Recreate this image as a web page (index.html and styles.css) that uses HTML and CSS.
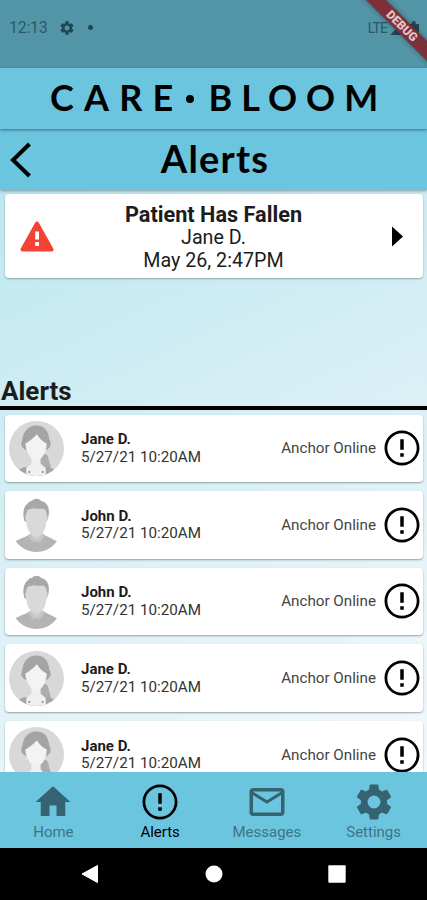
FILE: index.html
```
<!DOCTYPE html>
<html lang="en">
<head>
  <meta charset="UTF-8">
  <meta name="viewport" content="width=device-width, initial-scale=1">
  <title>Care Bloom - Alerts</title>
  <link rel="stylesheet" href="styles.css">
</head>
<body>
  <!-- Shared icons -->
  <svg class="defs" width="0" height="0">
    <symbol id="gear" viewBox="0 0 24 24">
      <path d="M19.43 12.98c.04-.32.07-.64.07-.98s-.03-.66-.07-.98l2.11-1.65c.19-.15.24-.42.12-.64l-2-3.46c-.12-.22-.39-.3-.61-.22l-2.49 1c-.52-.4-1.08-.73-1.69-.98l-.38-2.65C14.46 2.18 14.25 2 14 2h-4c-.25 0-.46.18-.49.42l-.38 2.65c-.61.25-1.17.59-1.69.98l-2.49-1c-.23-.09-.49 0-.61.22l-2 3.46c-.13.22-.07.49.12.64l2.11 1.65c-.04.32-.07.65-.07.98s.03.66.07.98l-2.11 1.65c-.19.15-.24.42-.12.64l2 3.46c.12.22.39.3.61.22l2.49-1c.52.4 1.08.73 1.69.98l.38 2.65c.03.24.24.42.49.42h4c.25 0 .46-.18.49-.42l.38-2.65c.61-.25 1.17-.59 1.69-.98l2.49 1c.23.09.49 0 .61-.22l2-3.46c.12-.22.07-.49-.12-.64l-2.11-1.65zM12 15.700a3.700 3.700 0 1 1 0-7.400 3.700 3.700 0 0 1 0 7.400z"/>
    </symbol>
    <symbol id="alert" viewBox="0 0 24 24">
      <path d="M11 15h2v2h-2zm0-8h2v6h-2zm.99-5C6.47 2 2 6.48 2 12s4.47 10 9.99 10C17.52 22 22 17.52 22 12S17.52 2 11.99 2zM12 20.400a8.400 8.400 0 1 1 0-16.800 8.400 8.400 0 0 1 0 16.800z"/>
    </symbol>
    <symbol id="jane" viewBox="0 0 54 54">
      <clipPath id="round"><circle cx="27" cy="27" r="27"/></clipPath>
      <g clip-path="url(#round)">
        <rect width="54" height="54" fill="#d8d8d8"/>
        <path d="M32 32c5 0 7 2 7 6 1 4 3 6 1 11l-5 2-5-12z" fill="#adadad"/>
        <path d="M9 48q5-3 9-3h18q5 0 9 3v6H9z" fill="#a6a6a6"/>
        <path d="M22 34h9v8l5 4v8H17v-8l5-4z" fill="#f0f0f0"/>
        <path d="M18 29c-6-2-7-6-5-10 1-9 6-14.500 14-14.500s12 6 12.500 13.500c3 5 1 9-3.500 11l-5-7H21z" fill="#a4a4a4"/>
        <path d="M16 22c4-2 8-5 11.500-9 2 4 5 7 9.500 9 0 9-5 16.500-10 16.500S16.500 31 16 22z" fill="#f3f3f3"/>
        <path d="M20 49v2m13-2v2" stroke="#888" stroke-width="1.500"/>
      </g>
    </symbol>
    <symbol id="john" viewBox="0 0 54 54">
      <path d="M6.500 43.500c4-3 10-4 14.500-7.500h12c5 3.500 10 4.500 14 7.500-5 7-12 10.500-20 10.500s-15-3.500-20.500-10.500z" fill="#b4b4b4"/>
      <path d="M21 32h12v5l-6 7-6-7z" fill="#d0d0d0"/>
      <path d="m21 36 6 7 6-7 2 3-5 6-3-2-3 2-5-6z" fill="#c5c5c5"/>
      <path d="M15.500 24c-2-5-2-12 1-16 3-2 3-4 6-4 2-3 7-3 9 0 6 1 8.500 7 7.500 13 0 3-1 5-2 7z" fill="#a8a8a8"/>
      <path d="M17 16c1-5 4-4 7-5 5 1 9 0 11 1 1 1 2 3 2 5l1 3-1.500 5c0 8-5 13.500-9.500 13.500S17.500 33 17 25l-1-5z" fill="#d9d9d9"/>
    </symbol>
  </svg>

  <div class="status-bar">
    <span class="time">12:13</span>
    <svg class="status-gear"><use href="#gear"/></svg>
    <span class="status-dot"></span>
    <span class="lte">LTE</span>
    <svg class="signal" viewBox="0 0 29 14"><path d="M0 14 13 1v13zM18 14V3h3l2-3h2l1 3h3v11z"/></svg>
  </div>
  <div class="debug"><span>DEBUG</span></div>

  <header class="brand">CARE<span class="brand-dot"></span><span class="bloom">BLOOM</span></header>

  <div class="title-bar">
    <svg class="back" viewBox="0 0 22 36"><path d="M19.500 2 3 18l16.500 16"/></svg>
    <h1>Alerts</h1>
  </div>

  <main>
    <section class="fall-card">
      <svg class="warning" viewBox="0 0 34 31">
        <path d="M17 2.500 31.500 28.500h-29z" fill="#f44336" stroke="#f44336" stroke-width="4" stroke-linejoin="round"/>
        <path d="M15.200 10.500h3.800v8h-3.800zm0 10.500h3.800v4h-3.800z" fill="#fff"/>
      </svg>
      <div class="fall-text">
        <strong>Patient Has Fallen</strong>
        <span>Jane D.</span>
        <span>May 26, 2:47PM</span>
      </div>
      <svg class="arrow" viewBox="0 0 12 22"><path d="M0 0 12 11 0 22z"/></svg>
    </section>

    <h2>Alerts</h2>

    <div class="alert-list">
      <div class="alert-row">
        <svg class="avatar"><use href="#jane"/></svg>
        <div class="who"><strong>Jane D.</strong><span>5/27/21 10:20AM</span></div>
        <span class="what">Anchor Online</span>
        <svg class="mark"><use href="#alert"/></svg>
      </div>
      <div class="alert-row">
        <svg class="avatar"><use href="#john"/></svg>
        <div class="who"><strong>John D.</strong><span>5/27/21 10:20AM</span></div>
        <span class="what">Anchor Online</span>
        <svg class="mark"><use href="#alert"/></svg>
      </div>
      <div class="alert-row">
        <svg class="avatar"><use href="#john"/></svg>
        <div class="who"><strong>John D.</strong><span>5/27/21 10:20AM</span></div>
        <span class="what">Anchor Online</span>
        <svg class="mark"><use href="#alert"/></svg>
      </div>
      <div class="alert-row">
        <svg class="avatar"><use href="#jane"/></svg>
        <div class="who"><strong>Jane D.</strong><span>5/27/21 10:20AM</span></div>
        <span class="what">Anchor Online</span>
        <svg class="mark"><use href="#alert"/></svg>
      </div>
      <div class="alert-row">
        <svg class="avatar"><use href="#jane"/></svg>
        <div class="who"><strong>Jane D.</strong><span>5/27/21 10:20AM</span></div>
        <span class="what">Anchor Online</span>
        <svg class="mark"><use href="#alert"/></svg>
      </div>
    </div>
  </main>

  <nav class="tabs">
    <a class="tab">
      <svg viewBox="0 0 24 24"><path d="M10 20v-6h4v6h5v-8h3L12 3 2 12h3v8z"/></svg>
      Home
    </a>
    <a class="tab active">
      <svg><use href="#alert"/></svg>
      Alerts
    </a>
    <a class="tab">
      <svg viewBox="0 0 24 24"><path d="M22 6c0-1.100-.9-2-2-2H4c-1.100 0-2 .9-2 2v12c0 1.100.9 2 2 2h16c1.100 0 2-.9 2-2V6zm-2 0-8 5-8-5h16zm0 12H4V8l8 5 8-5v10z"/></svg>
      Messages
    </a>
    <a class="tab">
      <svg><use href="#gear"/></svg>
      Settings
    </a>
  </nav>

  <div class="system-nav">
    <svg viewBox="0 0 20 20"><path d="M1 10 16.500 1.500v17z" stroke-linejoin="round" stroke="#fff"/></svg>
    <svg viewBox="0 0 20 20"><circle cx="10" cy="10" r="8.500"/></svg>
    <svg viewBox="0 0 20 20"><rect x="1.300" y="1.300" width="17.400" height="17.400" rx="1"/></svg>
  </div>
</body>
</html>
```
FILE: styles.css
```
* {
  margin: 0;
  padding: 0;
  box-sizing: border-box;
}
body {
  position: relative;
  width: 427px;
  height: 900px;
  display: flex;
  flex-direction: column;
  overflow: hidden;
  font-family: Roboto, sans-serif;
  color: #1c1c1c;
}
svg {
  flex: none;
}
.defs {
  position: absolute;
}

/* Android status bar */
.status-bar {
  height: 68px;
  flex: none;
  display: flex;
  align-items: center;
  padding: 0 8px 13px 9px;
  background: #5295a7;
  color: #2c596a;
  font-size: 16px;
}
.time {
  width: 39px;
  letter-spacing: -0.3px;
}
.status-gear {
  width: 16px;
  height: 16px;
  margin-left: 11px;
  fill: #224653;
}
.status-dot {
  width: 5px;
  height: 5px;
  margin-left: 13px;
  border-radius: 50%;
  background: #224653;
}
.lte {
  margin-left: auto;
  font-size: 14px;
  letter-spacing: -0.9px;
}
.signal {
  width: 29px;
  height: 14px;
  margin-left: 3px;
  fill: #234656;
}
.debug {
  position: absolute;
  top: 0;
  right: 0;
  width: 80px;
  height: 80px;
  overflow: hidden;
}
.debug span {
  position: absolute;
  top: 19px;
  left: -5px;
  width: 120px;
  height: 14px;
  background: #7d303a;
  box-shadow: 0 0 5px rgba(0, 0, 0, 0.4);
  color: #e2c5c9;
  font-size: 12px;
  font-weight: 900;
  line-height: 14px;
  text-align: center;
  transform: rotate(45deg);
}

/* Headers */
.brand {
  position: relative;
  z-index: 2;
  height: 61px;
  flex: none;
  display: flex;
  align-items: center;
  padding: 0 0 3px 50px;
  background: #6bc5df;
  box-shadow: 0 1px 3px rgba(0, 0, 0, 0.45);
  color: #000;
  font-family: Lato, sans-serif;
  font-size: 36px;
  font-weight: 700;
  letter-spacing: 10.200px;
}
.brand-dot {
  width: 8px;
  height: 8px;
  margin: 3px 14px 0 3px;
  border-radius: 50%;
  background: #000;
}
.bloom {
  letter-spacing: 9px;
}
.title-bar {
  position: relative;
  z-index: 1;
  height: 61px;
  flex: none;
  display: grid;
  grid-template-columns: 50px 1fr 50px;
  align-items: center;
  background: #6bc5df;
  box-shadow: 0 1px 3px rgba(0, 0, 0, 0.35);
}
.back {
  width: 22px;
  height: 36px;
  margin-left: 10px;
  fill: none;
  stroke: #000;
  stroke-width: 4;
}
.title-bar h1 {
  padding: 0 0 3px 3px;
  color: #000;
  font-family: Lato, sans-serif;
  font-size: 38px;
  font-weight: 700;
  letter-spacing: 1.200px;
  text-align: center;
}

/* Content */
main {
  flex: 1;
  min-height: 0;
  overflow: hidden;
  display: flex;
  flex-direction: column;
  background: linear-gradient(155deg, #bfe7f1 0%, #d7eff5 45%, #f2f9fd 100%);
}
.fall-card {
  height: 84px;
  flex: none;
  margin: 4px 4px 0 5px;
  padding: 0 20px 0 15px;
  display: grid;
  grid-template-columns: 34px 1fr 34px;
  align-items: center;
  background: #fff;
  border-radius: 4px;
  box-shadow: 0 1px 2px rgba(0, 0, 0, 0.3);
}
.warning {
  width: 34px;
  height: 31px;
}
.fall-text {
  display: flex;
  flex-direction: column;
  align-items: center;
  padding: 2px 0 0 4px;
  font-size: 19.700px;
  line-height: 23px;
}
.fall-text strong {
  font-size: 21.700px;
  font-weight: 700;
}
.arrow {
  width: 11px;
  height: 21px;
  justify-self: end;
}
main h2 {
  height: 132px;
  flex: none;
  padding: 98px 0 0 1px;
  border-bottom: 4px solid #000;
  font-size: 26px;
  font-weight: 700;
  line-height: 30px;
}
.alert-list {
  display: flex;
  flex-direction: column;
  gap: 9px;
  padding: 4.500px 4px 0 5px;
}
.alert-row {
  height: 67.600px;
  flex: none;
  display: flex;
  align-items: center;
  padding: 0 0 0 4px;
  background: #fff;
  border-radius: 4px;
  box-shadow: 0 1px 2px rgba(0, 0, 0, 0.35);
}
.avatar {
  width: 55px;
  height: 55px;
}
.who {
  display: flex;
  flex-direction: column;
  margin-left: 17px;
  padding-top: 1px;
  font-size: 15.200px;
  line-height: 17.500px;
  color: #333;
}
.who strong {
  font-size: 15px;
  font-weight: 700;
  color: #1c1c1c;
}
.what {
  margin-left: auto;
  color: #444;
  font-size: 15.200px;
}
.mark {
  width: 42px;
  height: 42px;
  margin-left: 5px;
}

/* Bottom tabs */
.tabs {
  height: 76px;
  flex: none;
  display: grid;
  grid-template-columns: repeat(4, 1fr);
  background: #6bc5df;
}
.tab {
  display: flex;
  flex-direction: column;
  align-items: center;
  padding-top: 9px;
  color: #3e7583;
  font-size: 15px;
  line-height: 18px;
}
.tab svg {
  width: 42px;
  height: 42px;
  fill: #356371;
}
.tab.active {
  color: #000;
}
.tab.active svg {
  fill: #000;
}

/* Android navigation */
.system-nav {
  height: 52px;
  flex: none;
  display: flex;
  justify-content: center;
  align-items: center;
  gap: 103px;
  background: #000;
}
.system-nav svg {
  width: 20px;
  height: 20px;
  fill: #fff;
}
```
